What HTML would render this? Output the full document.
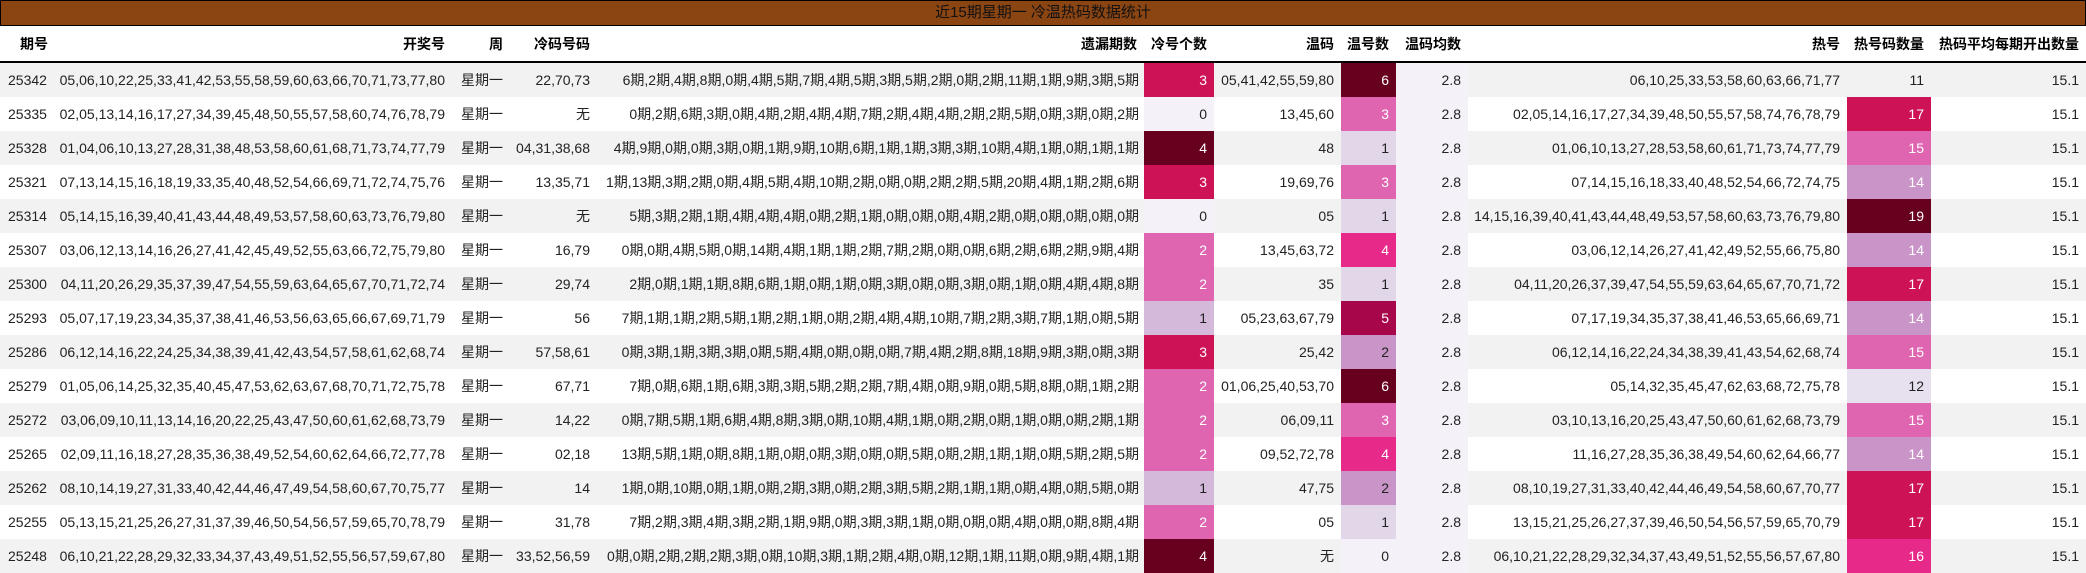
<!DOCTYPE html>
<html><head><meta charset="utf-8"><style>
*{margin:0;padding:0;box-sizing:border-box}
body{width:2086px;height:573px;overflow:hidden;background:#fff;font-family:"Liberation Sans","Noto Sans CJK SC",sans-serif;font-size:14px;color:#222}
.title{height:26px;background:#8B4513;border:1px solid #000;text-align:center;line-height:24px;font-size:15px;color:#111}
table{border-collapse:collapse;table-layout:fixed;width:2086px}
td,th{white-space:nowrap;text-align:right;padding:0 7px 0 0;overflow:visible}
th{height:35px;font-weight:bold;color:#000}
.line{height:2px;background:#000}
tbody tr{height:34px}
tbody tr:nth-child(odd) td{background:#f2f2f2}
tbody tr:nth-child(even) td{background:#fff}
td.l,th.l{text-align:left;padding:0 0 0 8px}
th.l{padding-left:20px}
td.m{padding-right:5px}
tbody tr td.lv{background:#f4f1f8}
tbody tr td.c0{background:#f4f1f8;color:#222}
tbody tr td.c1{background:#d4b9da;color:#222}
tbody tr td.w1{background:#e2d6e9;color:#222}
tbody tr td.w2{background:#c994c7;color:#222}
tbody tr td.c2{background:#df65b0;color:#fff}
tbody tr td.c3{background:#ce1256;color:#fff}
tbody tr td.c4{background:#e7298a;color:#fff}
tbody tr td.c5{background:#a8064a;color:#fff}
tbody tr td.c6{background:#67001f;color:#fff}
tbody tr td.h12{background:#e7e1ef;color:#222}
tbody tr td.h14{background:#c994c7;color:#fff}
</style></head><body>
<div class="title">近15期星期一 冷温热码数据统计</div>
<table><colgroup><col style="width:55px"><col style="width:397px"><col style="width:58px"><col style="width:87px"><col style="width:547px"><col style="width:70px"><col style="width:127px"><col style="width:55px"><col style="width:72px"><col style="width:379px"><col style="width:84px"><col style="width:155px"></colgroup>
<thead><tr><th class="l">期号</th><th>开奖号</th><th>周</th><th>冷码号码</th><th>遗漏期数</th><th>冷号个数</th><th>温码</th><th>温号数</th><th>温码均数</th><th>热号</th><th>热号码数量</th><th>热码平均每期开出数量</th></tr></thead></table>
<div class="line"></div>
<table><colgroup><col style="width:55px"><col style="width:397px"><col style="width:58px"><col style="width:87px"><col style="width:547px"><col style="width:70px"><col style="width:127px"><col style="width:55px"><col style="width:72px"><col style="width:379px"><col style="width:84px"><col style="width:155px"></colgroup>
<tbody>
<tr><td class="l">25342</td><td>05,06,10,22,25,33,41,42,53,55,58,59,60,63,66,70,71,73,77,80</td><td>星期一</td><td>22,70,73</td><td class="m">6期,2期,4期,8期,0期,4期,5期,7期,4期,5期,3期,5期,2期,0期,2期,11期,1期,9期,3期,5期</td><td class="c3">3</td><td>05,41,42,55,59,80</td><td class="c6">6</td><td class="lv">2.8</td><td>06,10,25,33,53,58,60,63,66,71,77</td><td>11</td><td>15.1</td></tr>
<tr><td class="l">25335</td><td>02,05,13,14,16,17,27,34,39,45,48,50,55,57,58,60,74,76,78,79</td><td>星期一</td><td>无</td><td class="m">0期,2期,6期,3期,0期,4期,2期,4期,4期,7期,2期,4期,4期,2期,2期,5期,0期,3期,0期,2期</td><td class="c0">0</td><td>13,45,60</td><td class="c2">3</td><td class="lv">2.8</td><td>02,05,14,16,17,27,34,39,48,50,55,57,58,74,76,78,79</td><td class="c3">17</td><td>15.1</td></tr>
<tr><td class="l">25328</td><td>01,04,06,10,13,27,28,31,38,48,53,58,60,61,68,71,73,74,77,79</td><td>星期一</td><td>04,31,38,68</td><td class="m">4期,9期,0期,0期,3期,0期,1期,9期,10期,6期,1期,1期,3期,3期,10期,4期,1期,0期,1期,1期</td><td class="c6">4</td><td>48</td><td class="w1">1</td><td class="lv">2.8</td><td>01,06,10,13,27,28,53,58,60,61,71,73,74,77,79</td><td class="c2">15</td><td>15.1</td></tr>
<tr><td class="l">25321</td><td>07,13,14,15,16,18,19,33,35,40,48,52,54,66,69,71,72,74,75,76</td><td>星期一</td><td>13,35,71</td><td class="m">1期,13期,3期,2期,0期,4期,5期,4期,10期,2期,0期,0期,2期,2期,5期,20期,4期,1期,2期,6期</td><td class="c3">3</td><td>19,69,76</td><td class="c2">3</td><td class="lv">2.8</td><td>07,14,15,16,18,33,40,48,52,54,66,72,74,75</td><td class="h14">14</td><td>15.1</td></tr>
<tr><td class="l">25314</td><td>05,14,15,16,39,40,41,43,44,48,49,53,57,58,60,63,73,76,79,80</td><td>星期一</td><td>无</td><td class="m">5期,3期,2期,1期,4期,4期,4期,0期,2期,1期,0期,0期,0期,4期,2期,0期,0期,0期,0期,0期</td><td class="c0">0</td><td>05</td><td class="w1">1</td><td class="lv">2.8</td><td>14,15,16,39,40,41,43,44,48,49,53,57,58,60,63,73,76,79,80</td><td class="c6">19</td><td>15.1</td></tr>
<tr><td class="l">25307</td><td>03,06,12,13,14,16,26,27,41,42,45,49,52,55,63,66,72,75,79,80</td><td>星期一</td><td>16,79</td><td class="m">0期,0期,4期,5期,0期,14期,4期,1期,1期,2期,7期,2期,0期,0期,6期,2期,6期,2期,9期,4期</td><td class="c2">2</td><td>13,45,63,72</td><td class="c4">4</td><td class="lv">2.8</td><td>03,06,12,14,26,27,41,42,49,52,55,66,75,80</td><td class="h14">14</td><td>15.1</td></tr>
<tr><td class="l">25300</td><td>04,11,20,26,29,35,37,39,47,54,55,59,63,64,65,67,70,71,72,74</td><td>星期一</td><td>29,74</td><td class="m">2期,0期,1期,1期,8期,6期,1期,0期,1期,0期,3期,0期,0期,3期,0期,1期,0期,4期,4期,8期</td><td class="c2">2</td><td>35</td><td class="w1">1</td><td class="lv">2.8</td><td>04,11,20,26,37,39,47,54,55,59,63,64,65,67,70,71,72</td><td class="c3">17</td><td>15.1</td></tr>
<tr><td class="l">25293</td><td>05,07,17,19,23,34,35,37,38,41,46,53,56,63,65,66,67,69,71,79</td><td>星期一</td><td>56</td><td class="m">7期,1期,1期,2期,5期,1期,2期,1期,0期,2期,4期,4期,10期,7期,2期,3期,7期,1期,0期,5期</td><td class="c1">1</td><td>05,23,63,67,79</td><td class="c5">5</td><td class="lv">2.8</td><td>07,17,19,34,35,37,38,41,46,53,65,66,69,71</td><td class="h14">14</td><td>15.1</td></tr>
<tr><td class="l">25286</td><td>06,12,14,16,22,24,25,34,38,39,41,42,43,54,57,58,61,62,68,74</td><td>星期一</td><td>57,58,61</td><td class="m">0期,3期,1期,3期,3期,0期,5期,4期,0期,0期,0期,7期,4期,2期,8期,18期,9期,3期,0期,3期</td><td class="c3">3</td><td>25,42</td><td class="w2">2</td><td class="lv">2.8</td><td>06,12,14,16,22,24,34,38,39,41,43,54,62,68,74</td><td class="c2">15</td><td>15.1</td></tr>
<tr><td class="l">25279</td><td>01,05,06,14,25,32,35,40,45,47,53,62,63,67,68,70,71,72,75,78</td><td>星期一</td><td>67,71</td><td class="m">7期,0期,6期,1期,6期,3期,3期,5期,2期,2期,7期,4期,0期,9期,0期,5期,8期,0期,1期,2期</td><td class="c2">2</td><td>01,06,25,40,53,70</td><td class="c6">6</td><td class="lv">2.8</td><td>05,14,32,35,45,47,62,63,68,72,75,78</td><td class="h12">12</td><td>15.1</td></tr>
<tr><td class="l">25272</td><td>03,06,09,10,11,13,14,16,20,22,25,43,47,50,60,61,62,68,73,79</td><td>星期一</td><td>14,22</td><td class="m">0期,7期,5期,1期,6期,4期,8期,3期,0期,10期,4期,1期,0期,2期,0期,1期,0期,0期,2期,1期</td><td class="c2">2</td><td>06,09,11</td><td class="c2">3</td><td class="lv">2.8</td><td>03,10,13,16,20,25,43,47,50,60,61,62,68,73,79</td><td class="c2">15</td><td>15.1</td></tr>
<tr><td class="l">25265</td><td>02,09,11,16,18,27,28,35,36,38,49,52,54,60,62,64,66,72,77,78</td><td>星期一</td><td>02,18</td><td class="m">13期,5期,1期,0期,8期,1期,0期,0期,3期,0期,0期,5期,0期,2期,1期,1期,0期,5期,2期,5期</td><td class="c2">2</td><td>09,52,72,78</td><td class="c4">4</td><td class="lv">2.8</td><td>11,16,27,28,35,36,38,49,54,60,62,64,66,77</td><td class="h14">14</td><td>15.1</td></tr>
<tr><td class="l">25262</td><td>08,10,14,19,27,31,33,40,42,44,46,47,49,54,58,60,67,70,75,77</td><td>星期一</td><td>14</td><td class="m">1期,0期,10期,0期,1期,0期,2期,3期,0期,2期,3期,5期,2期,1期,1期,0期,4期,0期,5期,0期</td><td class="c1">1</td><td>47,75</td><td class="w2">2</td><td class="lv">2.8</td><td>08,10,19,27,31,33,40,42,44,46,49,54,58,60,67,70,77</td><td class="c3">17</td><td>15.1</td></tr>
<tr><td class="l">25255</td><td>05,13,15,21,25,26,27,31,37,39,46,50,54,56,57,59,65,70,78,79</td><td>星期一</td><td>31,78</td><td class="m">7期,2期,3期,4期,3期,2期,1期,9期,0期,3期,3期,1期,0期,0期,0期,4期,0期,0期,8期,4期</td><td class="c2">2</td><td>05</td><td class="w1">1</td><td class="lv">2.8</td><td>13,15,21,25,26,27,37,39,46,50,54,56,57,59,65,70,79</td><td class="c3">17</td><td>15.1</td></tr>
<tr><td class="l">25248</td><td>06,10,21,22,28,29,32,33,34,37,43,49,51,52,55,56,57,59,67,80</td><td>星期一</td><td>33,52,56,59</td><td class="m">0期,0期,2期,2期,2期,3期,0期,10期,3期,1期,2期,4期,0期,12期,1期,11期,0期,9期,4期,1期</td><td class="c6">4</td><td>无</td><td class="c0">0</td><td class="lv">2.8</td><td>06,10,21,22,28,29,32,34,37,43,49,51,52,55,56,57,67,80</td><td class="c4">16</td><td>15.1</td></tr>
</tbody></table>
</body></html>
